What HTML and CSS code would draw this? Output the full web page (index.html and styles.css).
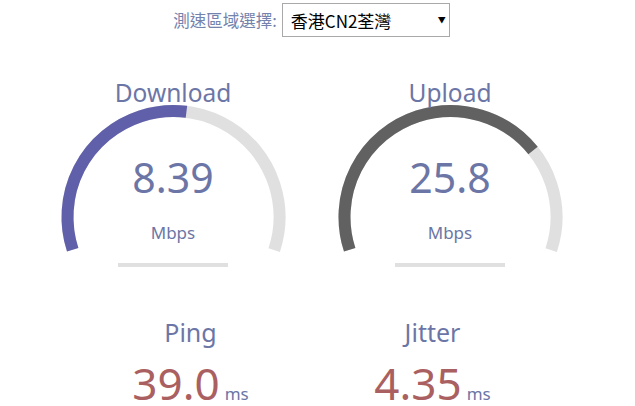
FILE: index.html
```html
<!DOCTYPE html>
<html lang="zh-Hant">
<head>
    <meta charset="UTF-8">
    <meta name="viewport" content="width=device-width, initial-scale=1.0">
    <title>Speedtest</title>
    <link rel="stylesheet" href="styles.css">
</head>
<body>
    <div class="server">
        <label for="server">測速區域選擇:</label>
        <span class="select-wrap">
            <select id="server">
                <option>香港CN2荃灣</option>
            </select>
            <span class="arrow">&#9660;</span>
        </span>
    </div>

    <div class="tests">
        <div class="test">
            <svg class="meter" width="277" height="200" viewBox="0 0 277 200">
                <circle cx="138.5" cy="147" r="106" fill="none" stroke="#e0e0e0" stroke-width="12"
                    stroke-dasharray="399.6 666" transform="rotate(162 138.5 147)"/>
                <circle cx="138.5" cy="147" r="106" fill="none" stroke="#6060aa" stroke-width="12"
                    stroke-dasharray="212.6 666" transform="rotate(162 138.5 147)"/>
            </svg>
            <div class="name">Download</div>
            <div class="value">8.39</div>
            <div class="unit">Mbps</div>
            <div class="bar"></div>
        </div>
        <div class="test">
            <svg class="meter" width="277" height="200" viewBox="0 0 277 200">
                <circle cx="138.5" cy="147" r="106" fill="none" stroke="#e0e0e0" stroke-width="12"
                    stroke-dasharray="399.6 666" transform="rotate(162 138.5 147)"/>
                <circle cx="138.5" cy="147" r="106" fill="none" stroke="#616161" stroke-width="12"
                    stroke-dasharray="294.1 666" transform="rotate(162 138.5 147)"/>
            </svg>
            <div class="name">Upload</div>
            <div class="value">25.8</div>
            <div class="unit">Mbps</div>
            <div class="bar"></div>
        </div>
    </div>

    <div class="tests small">
        <div class="stat">
            <div class="stat-name">Ping</div>
            <div class="stat-value">39.0<span class="ms">ms</span></div>
        </div>
        <div class="stat">
            <div class="stat-name">Jitter</div>
            <div class="stat-value">4.35<span class="ms">ms</span></div>
        </div>
    </div>
</body>
</html>
```

FILE: styles.css
```css
body {
    font-family: "Noto Sans", "Noto Sans CJK TC", sans-serif;
    margin: 0;
    padding: 0;
    background-color: #fff;
    color: #6c76a6;
    overflow: hidden;
}

.server {
    display: flex;
    justify-content: center;
    align-items: center;
    gap: 5px;
    padding: 3px 12px 0 0;
    font-size: 16.5px;
}

.server label {
    font-family: "Noto Sans CJK TC", sans-serif;
    color: #7383ad;
}

.select-wrap {
    position: relative;
    display: inline-block;
}

.select-wrap select {
    appearance: none;
    -webkit-appearance: none;
    width: 168px;
    height: 34px;
    margin: 0;
    padding: 0 0 0 8px;
    border: 1px solid #a9a9a9;
    border-radius: 0;
    background-color: #fff;
    color: #000;
    font-family: "Noto Sans CJK TC", sans-serif;
    font-size: 17px;
}

.arrow {
    position: absolute;
    right: 4px;
    top: 11px;
    font-size: 8px;
    color: #000;
    pointer-events: none;
}

.tests {
    display: flex;
    justify-content: center;
    padding-right: 12px;
}

.test {
    position: relative;
    width: 277px;
    height: 200px;
    margin-top: 33px;
    text-align: center;
}

.meter {
    position: absolute;
    left: 0;
    top: 0;
}

.name {
    position: relative;
    padding-top: 8px;
    font-size: 24.5px;
    line-height: 30px;
}

.value {
    position: relative;
    margin-top: 45px;
    font-size: 41px;
    line-height: 48px;
}

.unit {
    position: relative;
    margin-top: 22px;
    font-size: 17px;
    line-height: 20px;
}

.bar {
    width: 110px;
    height: 4px;
    margin: 20px auto 0;
    background-color: #e0e0e0;
}

.small .stat {
    width: 242px;
    text-align: center;
}

.stat-name {
    margin-top: 47px;
    font-size: 25px;
    line-height: 30px;
}

.stat-value {
    margin-top: 10px;
    font-size: 44px;
    line-height: 52px;
    color: #aa6060;
}

.ms {
    margin-left: 5px;
    font-size: 17px;
    color: #6c76a6;
}
```
